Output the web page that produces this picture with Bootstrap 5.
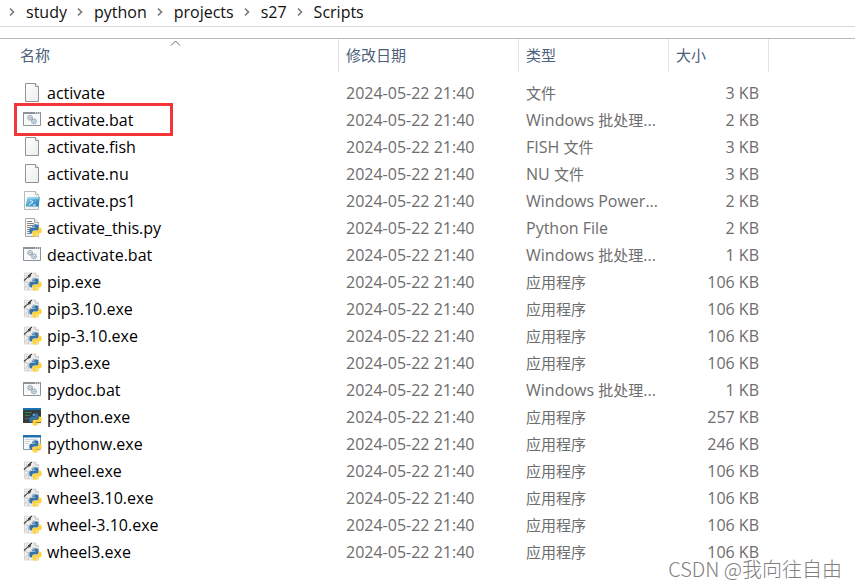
<!DOCTYPE html>
<html lang="zh-CN">
<head>
<meta charset="utf-8">
<meta name="viewport" content="width=device-width, initial-scale=1">
<title>Scripts</title>
<link href="https://cdn.jsdelivr.net/npm/bootstrap@5.3.0/dist/css/bootstrap.min.css" rel="stylesheet">
<style>
body{font-family:"Open Sans","Noto Sans CJK SC",sans-serif;font-size:16px;line-height:24px;background:#fff;color:#000;overflow:hidden}
.path-bar{height:27px;border-bottom:1px solid #d9d9d9;padding:0 0 2px 9px;gap:10px}
.path-bar a{color:#111;text-decoration:none}
.chev{width:7px;height:10px;fill:none;stroke:#777;stroke-width:1.6}
.files{margin-top:11px;border-top:1px solid #b9b9b9;table-layout:fixed;border-collapse:separate;border-spacing:0}
.files th{height:33px;padding:0 7px 2px;font-size:15px;font-weight:400;color:#4c607a;border-right:1px solid #e3e3e3;vertical-align:middle}
.files th:first-child{padding-left:20px}
.files th:last-child{border:0}
.files tbody::before{content:"";display:block;height:8px}
.files td{height:27px;padding:0 7px 2px;color:#6d6d6d;white-space:nowrap;vertical-align:middle}
.files td:first-child{padding-left:22px;color:#000}
.files td:nth-child(4){padding-right:10px;text-align:right}
.files td [lang]{font-size:15px;line-height:1}
.fname{gap:5px}
.c-name{width:339px}.c-date{width:180px}.c-type{width:150px}.c-size{width:100px}
.ico{width:20px;height:20px;flex:none}
.sort{position:absolute;left:170px;top:1px;width:11px;height:6px;fill:none;stroke:#666}
.marked::after{content:"";position:absolute;left:14px;top:-4px;width:159px;height:33px;border:3px solid #f53535}
.watermark{position:absolute;right:13px;bottom:4px;font:300 20px/30px "Noto Sans CJK SC",sans-serif;color:#808080;text-shadow:0 0 1px #fff}
</style>
</head>
<body class="position-relative vh-100">
<svg class="position-absolute" width="0" height="0" aria-hidden="true">
<defs>
<linearGradient id="paper" x2="1" y2="1"><stop stop-color="#fff"/><stop offset="1" stop-color="#ececec"/></linearGradient>
<linearGradient id="sky" x2="1" y2="1"><stop stop-color="#8ed2ee"/><stop offset="1" stop-color="#1478b4"/></linearGradient>
</defs>
<symbol id="py" viewBox="0 0 12 12"><path fill="#3674a8" d="M3 2.2Q3 .3 6 .3T8.7 2v2.6Q8.7 6 7.2 6H4.5Q3 6 3 7.5v1.2H2Q.2 8.700.2 6T2 3.500H6V3H3z"/><path fill="#ffd43b" d="M9 9.800Q9 11.700 6 11.700T3.300 10V7.400Q3.300 6.300 4.800 6.300H7.500Q9 6.300 9 4.700V3.300h1Q11.800 3.300 11.800 6T10 8.500H6V9h3z"/><circle cx="4.500" cy="1.700" r=".6" fill="#fff"/><circle cx="7.500" cy="10.300" r=".6" fill="#fff"/></symbol>
<symbol id="file" viewBox="0 0 20 20"><path fill="url(#paper)" stroke="#929292" d="M3.500.500h10l3 3v15h-13z"/><path fill="#fff" stroke="#929292" d="M13.500.500v3h3"/></symbol>
<symbol id="bat" viewBox="0 0 20 20"><path fill="#f8f9fa" stroke="#8b9298" d="M1.500 2.500h17v13h-17z"/><path fill="#8b9298" d="M1 2h18v2H1z"/><path stroke="#fff" d="M13 3h1m1 0h1m1 0h1"/><g fill="#e8ecef"><circle cx="8" cy="7.700" r="2.200" stroke="#8e989f" stroke-width="1.200" stroke-dasharray="1.200 .4"/><circle cx="12" cy="11.300" r="2.300" stroke="#8599a9" stroke-width="1.200" stroke-dasharray="1.200 .4"/></g><circle cx="8" cy="7.700" r=".7" fill="#8999a4"/><circle cx="12" cy="11.300" r=".9" fill="#7fb2d4"/></symbol>
<symbol id="ps" viewBox="0 0 20 20"><path fill="url(#paper)" stroke="#b8b8b8" d="M2.500.500h11l3 3v15h-14z"/><path fill="#fff" stroke="#b8b8b8" d="M13.500.500v3h3"/><path fill="url(#sky)" d="M5.500 6H18l-1.500 9.500H3.500z"/><path d="M6 7h11" stroke="#c8edf8"/><path d="m8 9 3 2-4 3m4 0h3" fill="none" stroke="#e1f7ff"/></symbol>
<symbol id="pyfile" viewBox="0 0 20 20"><path fill="url(#paper)" stroke="#aaa" d="M3.500.500h9l4 4v14h-13z"/><path fill="#eee" stroke="#aaa" d="M12.500.500v4h4"/><path stroke="#858585" d="M5 3.500h5M5 5.500h7M5 7.500h7M5 9.500h4M5 11.500h3M5 13.500h3M5 15.500h4"/><use href="#py" x="7" y="6" width="13" height="13"/></symbol>
<symbol id="exe" viewBox="0 0 20 20"><path fill="#eee" stroke="#ccc" stroke-width=".7" d="M2.500 1h11l3 3v14h-14z"/><path d="m13 1 .5 3H17" fill="#fff" stroke="#bbb"/><path d="m2 9 5 2 5-6m-9 11 4-5-1 7M4 3l2 3" stroke="#c4c4c4" fill="none"/><path d="m1.500 8 5-4 3-3-1 4-3 1-3 3z" fill="#444"/><path d="m6 4 4-3" stroke="#222"/><use href="#py" x="7" y="6" width="13" height="13"/></symbol>
<symbol id="console" viewBox="0 0 20 20"><path fill="#333d3d" d="M1 2h18v14H1z"/><path fill="#1d72b2" d="M1 1h18v2H1z"/><path stroke="#348449" d="M3 5.500h7M3 8.500h5"/><path stroke="#59646a" d="M3 11.500h4"/><use href="#py" x="7" y="6" width="13" height="13"/></symbol>
<symbol id="window" viewBox="0 0 20 20"><path fill="#f7f7f7" stroke="#8798a5" d="M1.500 2.500h17v13h-17z"/><path fill="#1d72b2" d="M1 1h18v2.500H1z"/><path stroke="#ccd4da" d="M3 5.500h12M3 7.500h5M3 9.500h4"/><use href="#py" x="7" y="6" width="13" height="13"/></symbol>
<symbol id="chev" viewBox="0 0 7 10"><path d="m1 1.500 3.500 3.500L1 8.500"/></symbol>
</svg>
<nav class="path-bar d-flex align-items-center" aria-label="路径">
<svg class="chev"><use href="#chev"/></svg><a href="#">study</a>
<svg class="chev"><use href="#chev"/></svg><a href="#">python</a>
<svg class="chev"><use href="#chev"/></svg><a href="#">projects</a>
<svg class="chev"><use href="#chev"/></svg><a href="#">s27</a>
<svg class="chev"><use href="#chev"/></svg><a href="#">Scripts</a>
</nav>
<main>
<table class="files w-100">
<colgroup><col class="c-name"><col class="c-date"><col class="c-type"><col class="c-size"><col></colgroup>
<thead><tr><th scope="col" class="position-relative">名称<svg class="sort" viewBox="0 0 11 6"><path d="m1 5.500 4.500-4.500L10 5.500"/></svg></th><th scope="col">修改日期</th><th scope="col">类型</th><th scope="col">大小</th><th></th></tr></thead>
<tbody>
<tr><td><div class="fname d-flex align-items-center"><svg class="ico"><use href="#file"/></svg>activate</div></td><td>2024-05-22 21:40</td><td><span lang="zh-CN">文件</span></td><td>3 KB</td></tr>
<tr><td class="position-relative marked"><div class="fname d-flex align-items-center"><svg class="ico"><use href="#bat"/></svg>activate.bat</div></td><td>2024-05-22 21:40</td><td>Windows <span lang="zh-CN">批处理</span>...</td><td>2 KB</td></tr>
<tr><td><div class="fname d-flex align-items-center"><svg class="ico"><use href="#file"/></svg>activate.fish</div></td><td>2024-05-22 21:40</td><td>FISH <span lang="zh-CN">文件</span></td><td>3 KB</td></tr>
<tr><td><div class="fname d-flex align-items-center"><svg class="ico"><use href="#file"/></svg>activate.nu</div></td><td>2024-05-22 21:40</td><td>NU <span lang="zh-CN">文件</span></td><td>3 KB</td></tr>
<tr><td><div class="fname d-flex align-items-center"><svg class="ico"><use href="#ps"/></svg>activate.ps1</div></td><td>2024-05-22 21:40</td><td>Windows Power...</td><td>2 KB</td></tr>
<tr><td><div class="fname d-flex align-items-center"><svg class="ico"><use href="#pyfile"/></svg>activate_this.py</div></td><td>2024-05-22 21:40</td><td>Python File</td><td>2 KB</td></tr>
<tr><td><div class="fname d-flex align-items-center"><svg class="ico"><use href="#bat"/></svg>deactivate.bat</div></td><td>2024-05-22 21:40</td><td>Windows <span lang="zh-CN">批处理</span>...</td><td>1 KB</td></tr>
<tr><td><div class="fname d-flex align-items-center"><svg class="ico"><use href="#exe"/></svg>pip.exe</div></td><td>2024-05-22 21:40</td><td><span lang="zh-CN">应用程序</span></td><td>106 KB</td></tr>
<tr><td><div class="fname d-flex align-items-center"><svg class="ico"><use href="#exe"/></svg>pip3.10.exe</div></td><td>2024-05-22 21:40</td><td><span lang="zh-CN">应用程序</span></td><td>106 KB</td></tr>
<tr><td><div class="fname d-flex align-items-center"><svg class="ico"><use href="#exe"/></svg>pip-3.10.exe</div></td><td>2024-05-22 21:40</td><td><span lang="zh-CN">应用程序</span></td><td>106 KB</td></tr>
<tr><td><div class="fname d-flex align-items-center"><svg class="ico"><use href="#exe"/></svg>pip3.exe</div></td><td>2024-05-22 21:40</td><td><span lang="zh-CN">应用程序</span></td><td>106 KB</td></tr>
<tr><td><div class="fname d-flex align-items-center"><svg class="ico"><use href="#bat"/></svg>pydoc.bat</div></td><td>2024-05-22 21:40</td><td>Windows <span lang="zh-CN">批处理</span>...</td><td>1 KB</td></tr>
<tr><td><div class="fname d-flex align-items-center"><svg class="ico"><use href="#console"/></svg>python.exe</div></td><td>2024-05-22 21:40</td><td><span lang="zh-CN">应用程序</span></td><td>257 KB</td></tr>
<tr><td><div class="fname d-flex align-items-center"><svg class="ico"><use href="#window"/></svg>pythonw.exe</div></td><td>2024-05-22 21:40</td><td><span lang="zh-CN">应用程序</span></td><td>246 KB</td></tr>
<tr><td><div class="fname d-flex align-items-center"><svg class="ico"><use href="#exe"/></svg>wheel.exe</div></td><td>2024-05-22 21:40</td><td><span lang="zh-CN">应用程序</span></td><td>106 KB</td></tr>
<tr><td><div class="fname d-flex align-items-center"><svg class="ico"><use href="#exe"/></svg>wheel3.10.exe</div></td><td>2024-05-22 21:40</td><td><span lang="zh-CN">应用程序</span></td><td>106 KB</td></tr>
<tr><td><div class="fname d-flex align-items-center"><svg class="ico"><use href="#exe"/></svg>wheel-3.10.exe</div></td><td>2024-05-22 21:40</td><td><span lang="zh-CN">应用程序</span></td><td>106 KB</td></tr>
<tr><td><div class="fname d-flex align-items-center"><svg class="ico"><use href="#exe"/></svg>wheel3.exe</div></td><td>2024-05-22 21:40</td><td><span lang="zh-CN">应用程序</span></td><td>106 KB</td></tr>
</tbody>
</table>
</main>
<div class="watermark">CSDN @我向往自由</div>
<script src="https://cdn.jsdelivr.net/npm/bootstrap@5.3.0/dist/js/bootstrap.bundle.min.js"></script>
</body>
</html>
